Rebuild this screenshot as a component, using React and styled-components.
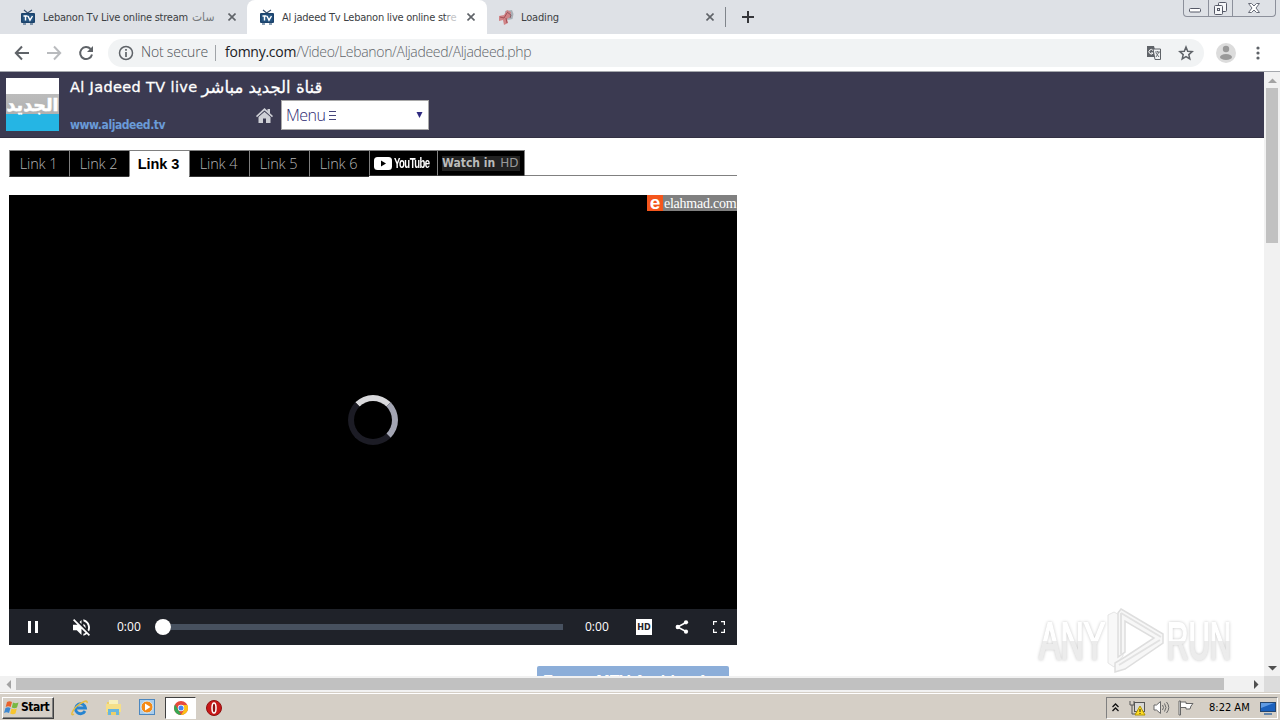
import styled, { createGlobalStyle } from 'styled-components';

const colors = {
  strip: '#dee1e6',
  omnibox: '#f1f3f4',
  icon: '#5f6368',
  header: '#3b3a51',
  track: '#f1f1f1',
  thumb: '#c1c1c1',
  taskbar: '#d5cfc6',
};

const tahoma = "'DejaVu Sans Condensed', 'DejaVu Sans', sans-serif";
const verdana = "'DejaVu Sans', sans-serif";
const openSans = "'Open Sans', sans-serif";

const GlobalStyle = createGlobalStyle`
  * {
    box-sizing: border-box;
  }

  body {
    margin: 0;
    overflow: hidden;
    background: #fff;
  }
`;

const Screen = styled.div`
  position: relative;
  width: 1280px;
  height: 720px;
  display: flex;
  flex-direction: column;
  overflow: hidden;
  font-family: ${tahoma};
  background: #fff;

  svg {
    display: block;
    flex: none;
  }
`;

const Text = styled.span`
  display: block;
  font-family: ${({ $font }) => $font || tahoma};
  font-size: ${({ $size }) => $size}px;
  font-weight: ${({ $weight }) => $weight || 400};
  letter-spacing: ${({ $spacing }) => $spacing || 0}px;
  color: ${({ $color }) => $color || 'inherit'};
  white-space: nowrap;
  line-height: 1.2;
`;

/* ---- Browser window ---- */

const TabStrip = styled.div`
  display: flex;
  height: 34px;
  background: ${colors.strip};
`;

const Tab = styled.div`
  display: flex;
  align-items: center;
  width: ${({ $width }) => $width}px;
  height: 34px;
  padding: 0 ${({ $right }) => $right}px 0 ${({ $left }) => $left}px;
  background: ${({ $active }) => ($active ? '#fff' : 'transparent')};
  border-radius: 8px 8px 0 0;
  color: #3c4043;
`;

const TabTitle = styled.div`
  display: flex;
  flex: 1;
  height: 18px;
  margin-left: 7px;
  white-space: pre;
  font-size: 11px;
  line-height: 19px;
  letter-spacing: ${({ $spacing }) => $spacing || 0}px;
`;

const TabTitleEnd = styled.span`
  margin-left: ${({ $gap }) => $gap || 0}px;
  font-size: ${({ $size }) => $size || 11}px;
  letter-spacing: 0;
  color: ${({ $color }) => $color};
`;

const TabDivider = styled.div`
  width: 1px;
  height: 20px;
  margin: 7px 16px 0 5px;
  background: #80858b;
`;

const NewTab = styled.div`
  padding-top: 11px;
`;

const WindowButtons = styled.div`
  display: flex;
  width: 93px;
  height: 17px;
  margin: 0 4px 0 auto;
  border: 1px solid #8c909b;
  border-top: 0;
  border-radius: 0 0 4px 4px;
`;

const WindowButton = styled.div`
  display: flex;
  justify-content: center;
  align-items: center;
  width: ${({ $width }) => $width}px;
  padding-top: ${({ $drop }) => $drop || 0}px;
  border-right: ${({ $last }) => ($last ? 0 : '1px solid #8c909b')};
`;

const Toolbar = styled.div`
  display: flex;
  align-items: center;
  height: 38px;
  padding-left: 14px;
  border-bottom: 1px solid #a5a8ad;
  background: #fff;
`;

const NavIcons = styled.div`
  display: flex;
  gap: 16px;
  width: 94px;
`;

const Omnibox = styled.div`
  display: flex;
  align-items: center;
  width: 1096px;
  height: 28px;
  padding: 0 10px;
  border-radius: 14px;
  background: ${colors.omnibox};
`;

const Secure = styled.div`
  width: 74px;
  margin-left: 7px;
`;

const OmniDivider = styled.div`
  width: 1px;
  height: 16px;
  margin-right: 9px;
  background: #a0a4a8;
`;

const OmniIcons = styled.div`
  display: flex;
  align-items: center;
  gap: 16px;
  margin-left: auto;
`;

/* ---- Page ---- */

const Viewport = styled.div`
  display: flex;
  height: 604px;
`;

const Page = styled.div`
  width: 1264px;
  overflow: hidden;
`;

const Header = styled.div`
  display: flex;
  height: 66px;
  padding: 6px;
  border-bottom: 1px solid #333143;
  background: ${colors.header};
`;

const ChannelLogo = styled.div`
  display: flex;
  flex-direction: column;
  width: 53px;
  height: 53px;
  background: linear-gradient(#fff 16px, #bcbcbc 16px, #b0b0b0 36px, #25b5e4 36px);
`;

const LogoText = styled.div`
  margin-top: 15px;
  width: 53px;
  text-align: center;
  font: 700 17.5px/24px 'DejaVu Sans', sans-serif;
  color: #fff;
  white-space: nowrap;
  -webkit-text-stroke: 0.6px #fff;
`;

const HeaderBody = styled.div`
  display: flex;
  flex-direction: column;
  margin-left: 11px;
  color: #fff;
`;

const HeaderTitle = styled.div`
  display: flex;
  align-items: center;
  gap: 4px;
  height: 16px;
  margin-top: 2px;
  white-space: nowrap;
  -webkit-text-stroke: 0.3px #fff;
`;

const HeaderRow = styled.div`
  display: flex;
  height: 31px;
  margin-top: 4px;
`;

const SiteLink = styled.div`
  width: 186px;
  padding-top: 18px;
  font-size: 12px;
  font-weight: 700;
  line-height: 14px;
  letter-spacing: -0.43px;
  color: #6a9bd8;
`;

const MenuSelect = styled.div`
  display: flex;
  align-items: center;
  justify-content: space-between;
  width: 148px;
  height: 30px;
  margin-left: 8px;
  padding: 1px 5px 0 4px;
  border: 1px solid #a9a9a9;
  background: #fff;
  color: #2b2870;
`;

const MenuLabel = styled.div`
  display: flex;
  align-items: center;
  gap: 3px;
`;

const Content = styled.div`
  width: 728px;
  margin: 12px 0 0 9px;
`;

const Links = styled.div`
  display: flex;
  height: 26px;
  border-bottom: 1px solid #808080;
`;

const LinkTab = styled.div`
  display: flex;
  align-items: center;
  justify-content: center;
  width: ${({ $width }) => $width || 60}px;
  height: ${({ $short }) => ($short ? 26 : 27)}px;
  padding-right: ${({ $last }) => ($last ? 0 : 2)}px;
  border: 1px solid #808080;
  border-right-width: ${({ $last }) => ($last ? 1 : 0)}px;
  border-bottom-color: ${({ $active }) => ($active ? '#fff' : '#333')};
  background: ${({ $active }) => ($active ? '#fff' : '#000')};
  color: ${({ $active }) => ($active ? '#000' : '#b4b4b4')};
  font: ${({ $active }) => ($active ? 700 : 300)} 14.5px/20px ${({ $active }) => ($active ? "'Liberation Sans'" : "'Open Sans'")}, sans-serif;
  letter-spacing: -0.1px;
  white-space: nowrap;
`;

const YouTubeText = styled.span`
  margin-left: 2px;
  width: 37px;
  color: #fff;
  font: 700 14px/16px 'Liberation Sans', sans-serif;
  letter-spacing: -0.8px;
  transform: scaleX(0.68);
  transform-origin: left;
`;

const WatchHd = styled.div`
  display: flex;
  align-items: center;
  gap: 5px;
  width: 78px;
  height: 15px;
  background: #222;
  color: #bbb;
`;

const Player = styled.div`
  display: flex;
  flex-direction: column;
  height: 450px;
  margin-top: 19px;
  background: #000;
`;

const Brand = styled.div`
  display: flex;
  align-self: flex-end;
  width: 90px;
  height: 16px;
  background: #808080;
`;

const BrandMark = styled.div`
  width: 16px;
  height: 16px;
  background: #f4561c;
  color: #fff;
  text-align: center;
  font: 700 19px/15px 'Liberation Sans', sans-serif;
`;

const BrandName = styled.div`
  padding-left: 1px;
  font: 14px/17px 'Liberation Serif', serif;
  letter-spacing: -0.25px;
  color: #fff;
`;

const Stage = styled.div`
  display: flex;
  flex: 1;
  align-items: center;
  justify-content: center;
  padding-top: 20px;
`;

const Spinner = styled.div`
  width: 50px;
  height: 50px;
  border: 6px solid #1c1c25;
  border-top-color: #d9d9dc;
  border-right-color: #a3a5b3;
  border-radius: 50%;
`;

const Controls = styled.div`
  display: flex;
  align-items: center;
  height: 36px;
  padding-left: 18px;
  background: #1f2229;
  color: #fff;
`;

const ControlSlot = styled.div`
  width: ${({ $width }) => $width}px;
`;

const SeekBar = styled.div`
  display: flex;
  align-items: center;
  width: 408px;
  height: 16px;
`;

const Knob = styled.div`
  width: 16px;
  height: 16px;
  border-radius: 50%;
  background: #fff;
`;

const SeekTrack = styled.div`
  flex: 1;
  height: 6px;
  background: #47515f;
`;

const HdBadge = styled.div`
  width: 16px;
  height: 16px;
  background: #fff;
  color: #1f2229;
  text-align: center;
  font: 700 8px/17px 'DejaVu Sans', sans-serif;
`;

const VoteButton = styled.div`
  width: 192px;
  height: 32px;
  margin: 21px 0 0 528px;
  padding: 6px 6px 0;
  display: flex;
  justify-content: space-between;
  border-radius: 2px 2px 0 0;
  background: #8caed9;
  color: #fff;
  font: 700 16px/20px 'Liberation Sans', 'DejaVu Sans', sans-serif;
  white-space: nowrap;
`;

/* ---- Scrollbars ---- */

const VScroll = styled.div`
  display: flex;
  flex-direction: column;
  align-items: center;
  width: 16px;
  background: ${colors.track};
`;

const HScroll = styled.div`
  display: flex;
  align-items: center;
  height: 16px;
  background: ${colors.track};
`;

const ScrollArrow = styled.div`
  display: flex;
  align-items: center;
  justify-content: center;
  width: 16px;
  height: 16px;
`;

const VThumb = styled.div`
  width: 12px;
  height: 155px;
  background: ${colors.thumb};
`;

const HThumb = styled.div`
  width: 1208px;
  height: 12px;
  margin-right: 24px;
  background: ${colors.thumb};
`;

const ScrollCorner = styled.div`
  width: 16px;
  height: 16px;
  background: #dcdcdc;
`;

const Spacer = styled.div`
  flex: 1;
`;

/* ---- Taskbar ---- */

const Taskbar = styled.div`
  display: flex;
  align-items: center;
  height: 28px;
  padding: 2px 2px 0;
  border-top: 1px solid #d5cfc6;
  box-shadow: inset 0 1px 0 #fff;
  background: ${colors.taskbar};
`;

const StartButton = styled.div`
  display: flex;
  align-items: center;
  gap: 1px;
  width: 52px;
  height: 22px;
  padding-left: 1px;
  border: 1px solid;
  border-color: #fff #404040 #404040 #fff;
  box-shadow: inset -1px -1px 0 #808080;
  color: #000;
`;

const TaskItem = styled.div`
  display: flex;
  align-items: center;
  justify-content: center;
  width: ${({ $active }) => ($active ? 31 : 24)}px;
  height: 22px;
  margin-left: ${({ $gap }) => $gap}px;
  border: 1px solid ${({ $active }) => ($active ? '#404040' : 'transparent')};
  border-right-color: ${({ $active }) => ($active ? '#fff' : 'transparent')};
  border-bottom-color: ${({ $active }) => ($active ? '#fff' : 'transparent')};
  background: ${({ $active }) => ($active ? '#fff' : 'transparent')};
`;

const Tray = styled.div`
  display: flex;
  align-items: center;
  width: 172px;
  height: 22px;
  margin-left: auto;
  padding-left: 5px;
  border: 1px solid;
  border-color: #808080 #fff #fff #808080;
  color: #000;
`;

const TraySlot = styled.div`
  width: ${({ $width }) => $width}px;
`;

const Watermark = styled.div`
  position: absolute;
  left: 1039px;
  top: 608px;
  display: flex;
  align-items: center;
  width: 200px;
  height: 66px;
`;

const WatermarkWord = styled.div`
  width: ${({ $width }) => $width}px;
  filter: drop-shadow(0 0 1.5px rgba(0, 0, 0, 0.22));
`;

const WatermarkFit = styled.div`
  width: max-content;
  font: 400 52px/66px 'Liberation Sans', sans-serif;
  color: transparent;
  background: linear-gradient(#fff 50%, #ececec 50%);
  background-clip: text;
  -webkit-text-stroke: 2px transparent;
  transform: scaleX(${({ $scale }) => $scale});
  transform-origin: left;
`;

const CloseIcon = ({ size = 8 }) => (
  <svg width={size} height={size} viewBox="0 0 8 8" fill="none" stroke="#5f6368" strokeWidth="1.6">
    <path d="M0.5 0.5L7.5 7.5M7.5 0.5L0.5 7.5" />
  </svg>
);

const TvIcon = () => (
  <svg width="16" height="16" viewBox="0 0 16 16">
    <path d="M4 1l3.6 3L12 1" fill="none" stroke="#37506f" strokeWidth="1.2" />
    <rect x="1" y="4" width="14" height="10" rx="1" fill="#1b426b" />
    <rect x="2.5" y="5.5" width="11" height="7" fill="#285784" />
    <path d="M3.5 7h4M5.5 7v4.5M8 7l2 4.2L12.5 7" fill="none" stroke="#fff" strokeWidth="1.4" />
    <path d="M3 15h3M10 15h3" stroke="#1b426b" />
  </svg>
);

const LoadingIcon = () => (
  <svg width="16" height="16" viewBox="0 0 16 16">
    <path d="M7 2l7-1 1.500 4-1 5-5 1-2-4z" fill="#a9b0b7" />
    <path d="M1 7l5-1 3-5 4 2-1 5-3 2 1 4-4 2-1-5-4 1z" fill="#d08487" />
    <path d="M2 8l4 1 3-5M8 9l1 5" fill="none" stroke="#a44e55" />
    <path d="M9 3l4 3-1 3" fill="none" stroke="#8d5b62" />
  </svg>
);

const Arrow = ({ dir, color = '#505050' }) => {
  const paths = {
    up: 'M0 5L4.5 0.5L9 5z',
    down: 'M0 0L4.5 4.5L9 0z',
    left: 'M5 0L0.5 4.5L5 9z',
    right: 'M0 0L4.5 4.5L0 9z',
  };
  const vertical = dir === 'up' || dir === 'down';
  return (
    <svg width={vertical ? 9 : 5} height={vertical ? 5 : 9} fill={color}>
      <path d={paths[dir]} />
    </svg>
  );
};

const Tabs = () => (
  <TabStrip>
    <Tab $width={247} $left={20} $right={11}>
      <TvIcon />
      <TabTitle $spacing={-0.24}>
        Lebanon Tv Live online stream
        <TabTitleEnd $gap={4} $size={12} $color="#777a7d">سات</TabTitleEnd>
      </TabTitle>
      <CloseIcon />
    </Tab>
    <Tab $width={240} $left={12} $right={12} $active>
      <TvIcon />
      <TabTitle $spacing={-0.24}>
        Al jadeed Tv Lebanon live online st
        <TabTitleEnd $color="#8b8d90">r</TabTitleEnd>
        <TabTitleEnd $color="#c4c5c7">e</TabTitleEnd>
      </TabTitle>
      <CloseIcon />
    </Tab>
    <Tab $width={233} $left={11} $right={6}>
      <LoadingIcon />
      <TabTitle $spacing={-0.15}>Loading</TabTitle>
      <CloseIcon />
    </Tab>
    <TabDivider />
    <NewTab>
      <svg width="12" height="12" stroke="#35363a" strokeWidth="2">
        <path d="M6 0v12M0 6h12" />
      </svg>
    </NewTab>
    <WindowButtons>
      <WindowButton $width={25} $drop={4}>
        <svg width="13" height="6" fill="#fff" stroke="#555967">
          <rect x="0.5" y="1.5" width="11" height="3.5" rx="1" />
        </svg>
      </WindowButton>
      <WindowButton $width={25}>
        <svg width="13" height="13" fill="#f5f6f8" stroke="#555967">
          <rect x="4.5" y="0.5" width="8" height="9" rx="1" />
          <rect x="0.5" y="3.5" width="8" height="9" rx="1" />
          <rect x="3.5" y="6.5" width="2" height="2" />
        </svg>
      </WindowButton>
      <WindowButton $width={42} $last>
        <svg width="12" height="10" viewBox="0 0 12 10">
          <path d="M.5.5h3L6 3 8.500.5h3L8 5l3.500 4.500h-3L6 7 3.500 9.500h-3L4 5z" fill="#fff" stroke="#686c79" />
        </svg>
      </WindowButton>
    </WindowButtons>
  </TabStrip>
);

const AddressBar = () => (
  <Toolbar>
    <NavIcons>
      <svg width="16" height="16" fill="none" stroke="#5f6368" strokeWidth="2">
        <path d="M15 8H2M8 1.500L1.800 8L8 14.500" />
      </svg>
      <svg width="16" height="16" fill="none" stroke="#b9bbbe" strokeWidth="2">
        <path d="M1 8h13M8 1.500L14.200 8L8 14.500" />
      </svg>
      <svg width="16" height="16" fill="none" stroke="#5f6368" strokeWidth="2">
        <path d="M12.600 4A6 6 0 1 0 14 9.500" />
        <path d="M15 1v6H9z" fill="#5f6368" stroke="none" />
      </svg>
    </NavIcons>
    <Omnibox>
      <svg width="16" height="16" fill="none" stroke="#5f6368" strokeWidth="1.500">
        <circle cx="8" cy="8" r="6.500" />
        <path d="M8 7v5M8 4v1.700" strokeWidth="1.700" />
      </svg>
      <Secure>
        <Text $font={openSans} $size={14} $weight={300} $spacing={-0.2} $color="#4d5156">Not secure</Text>
      </Secure>
      <OmniDivider />
      <Text $font={openSans} $size={14} $color="#202124" $spacing={-0.25}>fomny.com</Text>
      <Text $font={openSans} $size={14} $weight={300} $color="#606469" $spacing={-0.32}>
        /Video/Lebanon/Aljadeed/Aljadeed.php
      </Text>
      <OmniIcons>
        <svg width="16" height="16" viewBox="0 0 16 16">
          <path d="M1 1h7l3 11H1z" fill="#5f6368" />
          <path d="M7 4h7.500v10.500H9z" fill="#f1f3f4" stroke="#5f6368" />
          <path d="M7 5.500A2.200 2.200 0 1 0 7 8H5" fill="none" stroke="#fff" />
          <path d="M9 7h5M11.500 6v1M10 8l3 4M13 7l-3 5" fill="none" stroke="#6f7378" />
        </svg>
        <svg width="16" height="16" viewBox="0 0 16 16" fill="none" stroke="#5f6368" strokeWidth="1.500">
          <path d="M8 2l1.700 4.200 4.500.4-3.400 3 1 4.400L8 11.600 4.200 14l1-4.400-3.400-3 4.500-.4z" />
        </svg>
      </OmniIcons>
    </Omnibox>
    <ControlSlot $width={12} />
    <svg width="20" height="20">
      <circle cx="10" cy="10" r="10" fill="#dcdcdc" />
      <circle cx="10" cy="6" r="3.200" fill="#999" />
      <ellipse cx="10" cy="14" rx="6" ry="3" fill="#999" />
    </svg>
    <ControlSlot $width={20} />
    <svg width="4" height="14" fill="#5f6368">
      <circle cx="2" cy="2" r="1.600" />
      <circle cx="2" cy="7" r="1.600" />
      <circle cx="2" cy="12" r="1.600" />
    </svg>
  </Toolbar>
);

const SiteHeader = () => (
  <Header>
    <ChannelLogo>
      <LogoText>الجديد</LogoText>
    </ChannelLogo>
    <HeaderBody>
      <HeaderTitle>
        <Text $font={verdana} $size={14.5} $spacing={0.35}>Al Jadeed TV live</Text>
        <Text $font={verdana} $size={16.5}>قناة الجديد مباشر</Text>
      </HeaderTitle>
      <HeaderRow>
        <SiteLink>www.aljadeed.tv</SiteLink>
        <svg width="17" height="31" viewBox="0 -8 17 31" fill="#cfd0d6">
          <path d="M0 8L8.500 0l3 2.800V1h2.500v4.200L17 8l-1 1.200L8.500 2.500 1 9.200z" />
          <path d="M2.500 9L8.500 3.800 14.500 9v6H10v-4.500H7V15H2.500z" />
        </svg>
        <MenuSelect>
          <MenuLabel>
            <Text $font={openSans} $size={16} $weight={300} $spacing={-0.5}>Menu</Text>
            <svg width="8" height="11" stroke="#45447a">
              <path d="M0 1.500h7M0 5.500h7M0 9.500h7" />
            </svg>
          </MenuLabel>
          <svg width="7" height="7" fill="#2f2a80">
            <path d="M0.500 0h6L3.500 6z" />
          </svg>
        </MenuSelect>
      </HeaderRow>
    </HeaderBody>
  </Header>
);

const VideoPlayer = () => (
  <Player>
    <Brand>
      <BrandMark>e</BrandMark>
      <BrandName>elahmad.com</BrandName>
    </Brand>
    <Stage>
      <Spinner />
    </Stage>
    <Controls>
      <ControlSlot $width={46}>
        <svg width="12" height="12" fill="#fff">
          <path d="M1 0h3v12H1zM8 0H11v12H8z" />
        </svg>
      </ControlSlot>
      <ControlSlot $width={44}>
        <svg width="17" height="17" viewBox="3 3 18 18" fill="#fff">
          <path d="M16.500 12A4.500 4.500 0 0 0 14 7.970v2.210l2.450 2.450c.03-.2.05-.41.05-.63zm2.500 0c0 .94-.2 1.820-.54 2.640l1.510 1.510C20.630 14.910 21 13.500 21 12c0-4.280-2.990-7.860-7-8.770v2.060c2.890.86 5 3.540 5 6.710zM4.270 3L3 4.270 7.730 9H3v6h4l5 5v-6.730l4.250 4.250c-.67.52-1.420.93-2.250 1.180v2.060c1.380-.31 2.630-.95 3.690-1.810L19.730 21 21 19.730l-9-9L4.270 3zM12 4L9.910 6.090 12 8.180V4z" />
        </svg>
      </ControlSlot>
      <ControlSlot $width={38}>
        <Text $size={12} $font={openSans}>0:00</Text>
      </ControlSlot>
      <SeekBar>
        <Knob />
        <SeekTrack />
      </SeekBar>
      <ControlSlot $width={22} />
      <ControlSlot $width={51}>
        <Text $size={12} $font={openSans}>0:00</Text>
      </ControlSlot>
      <ControlSlot $width={39}>
        <HdBadge>HD</HdBadge>
      </ControlSlot>
      <ControlSlot $width={38}>
        <svg width="14" height="14" fill="#fff">
          <path d="M11 2.500L2.500 7L11 11.500" fill="none" stroke="#fff" strokeWidth="1.500" />
          <circle cx="11" cy="2.300" r="2.100" />
          <circle cx="2.800" cy="7" r="2.200" />
          <circle cx="11" cy="11.700" r="2.100" />
        </svg>
      </ControlSlot>
      <svg width="12" height="12" fill="none" stroke="#fff" strokeWidth="1.200">
        <path d="M0.600 4V0.600H4M8 .6h3.400V4M11.400 8v3.400H8M4 11.400H.6V8" />
      </svg>
    </Controls>
  </Player>
);

const LINKS = ['Link 1', 'Link 2', 'Link 3', 'Link 4', 'Link 5', 'Link 6'];

const Desktop = () => (
  <Taskbar>
    <StartButton>
      <svg width="16" height="16" viewBox="0 0 16 16">
        <path d="M3 2q2.500-1.500 5 0L6.700 7q-2.500-1.500-5 0z" fill="#e9622c" />
        <path d="M9 2.500q2.500 1.500 5.500 0L13 7.500q-2.500 1.500-5.200 0z" fill="#79b843" />
        <path d="M1.500 8q2.500-1.500 5 0L5 13q-2.500-1.500-5 0z" fill="#3d88d1" />
        <path d="M7.500 8.500q2.500 1.500 5.300 0L11.500 13.500q-2.500 1.500-5.300 0z" fill="#f7c52e" />
      </svg>
      <Text $size={12} $weight={700} $spacing={-0.5}>Start</Text>
    </StartButton>
    <TaskItem $gap={14}>
      <svg width="18" height="18" viewBox="0 0 18 18" fill="none">
        <path d="M14 12a5 5 0 1 1 .5-3H5" stroke="#2784d0" strokeWidth="2.800" />
        <path d="M3 15C-1 18 1 11 6 7S17 0 16 4" stroke="#e8bd40" strokeWidth="1.500" />
      </svg>
    </TaskItem>
    <TaskItem $gap={9}>
      <svg width="17" height="17" viewBox="0 0 17 17">
        <path d="M2 3h5l1 2h7v11H2z" fill="#edcf6b" />
        <path d="M4 1h9v5H4z" fill="#f8f1bc" />
        <path d="M1 5h15v8H1z" fill="#f5df88" />
        <path d="M3 16v-6h11v6h-3v-3H6v3z" fill="#68b7df" />
      </svg>
    </TaskItem>
    <TaskItem $gap={10}>
      <svg width="17" height="17" viewBox="0 0 17 17">
        <rect x="0.500" y="0.500" width="15" height="15" fill="#a9cdec" stroke="#4c87bf" />
        <circle cx="8" cy="8" r="6" fill="#f48a16" stroke="#d5e9f7" />
        <path d="M6 4.500L11.500 8L6 11.500z" fill="#fff" />
      </svg>
    </TaskItem>
    <TaskItem $gap={6} $active>
      <svg width="14" height="14" viewBox="0 0 14 14">
        <circle cx="7" cy="7" r="7" fill="#e64a3d" />
        <path d="M1 3.500L5 10L7 14A7 7 0 0 1 1 3.500z" fill="#35a853" />
        <path d="M7 4h6.300A7 7 0 0 1 7 14l3-5z" fill="#fbc116" />
        <circle cx="7" cy="7" r="3.200" fill="#fff" />
        <circle cx="7" cy="7" r="2.500" fill="#4285f4" />
      </svg>
    </TaskItem>
    <TaskItem $gap={6}>
      <svg width="16" height="16">
        <circle cx="8" cy="8" r="7.500" fill="#c91818" stroke="#8e1010" />
        <ellipse cx="8" cy="8" rx="2" ry="5" fill="#8e1010" stroke="#fff" strokeWidth="1.500" />
      </svg>
    </TaskItem>
    <Tray>
      <TraySlot $width={17}>
        <svg width="7" height="9" fill="none" stroke="#111" strokeWidth="1.300">
          <path d="M0.500 4L3.500 1L6.500 4M0.500 8L3.500 5L6.500 8" />
        </svg>
      </TraySlot>
      <TraySlot $width={24}>
        <svg width="17" height="16" viewBox="0 0 17 16">
          <path d="M1 1v4h4V1M3 5v9h4" fill="none" stroke="#555" />
          <rect x="5.500" y="2.500" width="10" height="9" fill="#d8d8d5" stroke="#555" />
          <path d="M11 6l5 9H6z" fill="#ffdc25" stroke="#b29600" />
          <path d="M11 9v3M11 13v1" stroke="#222" />
        </svg>
      </TraySlot>
      <TraySlot $width={25}>
        <svg width="17" height="16" viewBox="0 0 17 16" fill="none" stroke="#686868">
          <path d="M1 5h2.500L7.500 1.500v12L3.500 10H1z" fill="#fff" />
          <path d="M9.500 5q2 2.500 0 5M11.500 3.500q3 4 0 8M13.500 2q4.500 5.500 0 11" />
        </svg>
      </TraySlot>
      <TraySlot $width={31}>
        <svg width="17" height="16" viewBox="0 0 17 16" fill="#fff" stroke="#666">
          <path d="M1 1h1.500v14H1zM2.500 2H8v1.500h7L13 6l-1 3H8V7.500H2.500z" />
        </svg>
      </TraySlot>
      <TraySlot $width={51}>
        <Text $size={11}>8:22 AM</Text>
      </TraySlot>
      <svg width="16" height="14" viewBox="0 0 16 14">
        <rect x="0.500" y="1.500" width="15" height="9" fill="#1b61bd" stroke="#24466f" />
        <path d="M1 2h13L1 7z" fill="#5f9be4" />
        <path d="M4 13h8" stroke="#6285ab" strokeWidth="2" />
      </svg>
    </Tray>
  </Taskbar>
);

const App = () => (
  <Screen>
    <GlobalStyle />
    <Tabs />
    <AddressBar />
    <Viewport>
      <Page>
        <SiteHeader />
        <Content>
          <Links>
            {LINKS.map((label) => (
              <LinkTab key={label} $active={label === 'Link 3'}>{label}</LinkTab>
            ))}
            <LinkTab $width={68} $short>
              <svg width="18" height="13">
                <rect width="18" height="13" rx="3.500" fill="#fff" />
                <path d="M7 3.500L12 6.500L7 9.500z" fill="#000" />
              </svg>
              <YouTubeText>YouTube</YouTubeText>
            </LinkTab>
            <LinkTab $width={88} $short $last>
              <WatchHd>
                <Text $size={12} $weight={700}>Watch in</Text>
                <Text $font={verdana} $size={12} $color="#999">HD</Text>
              </WatchHd>
            </LinkTab>
          </Links>
          <VideoPlayer />
          <VoteButton>
            <span>Formy MTV Arabic</span>
            <span>قناة</span>
          </VoteButton>
        </Content>
      </Page>
      <VScroll>
        <ScrollArrow><Arrow dir="up" color="#a3a3a3" /></ScrollArrow>
        <VThumb />
        <Spacer />
        <ScrollArrow><Arrow dir="down" /></ScrollArrow>
      </VScroll>
    </Viewport>
    <HScroll>
      <ScrollArrow><Arrow dir="left" color="#a3a3a3" /></ScrollArrow>
      <HThumb />
      <ScrollArrow><Arrow dir="right" /></ScrollArrow>
      <ScrollCorner />
    </HScroll>
    <Desktop />
    <Watermark>
      <WatermarkWord $width={68}>
        <WatermarkFit $scale={0.62}>ANY</WatermarkFit>
      </WatermarkWord>
      <svg width="60" height="66" viewBox="0 0 60 66" fill="#f7f7f7" stroke="#dedede">
        <path d="M7 4L16 9V48L7 59L1 55V7z" opacity=".8" />
        <path
          d="M14 1L56 26V35L18 61L8 64L8 55L18 49L47 30L18 13V44L11 49V5z"
          strokeWidth="1.500"
        />
        <path d="M14 5L54 29M14 5V46M12 57L53 32" fill="none" stroke="#e2e2e2" strokeWidth="2" />
      </svg>
      <WatermarkWord $width={66}>
        <WatermarkFit $scale={0.57}>RUN</WatermarkFit>
      </WatermarkWord>
    </Watermark>
  </Screen>
);

export default App;
